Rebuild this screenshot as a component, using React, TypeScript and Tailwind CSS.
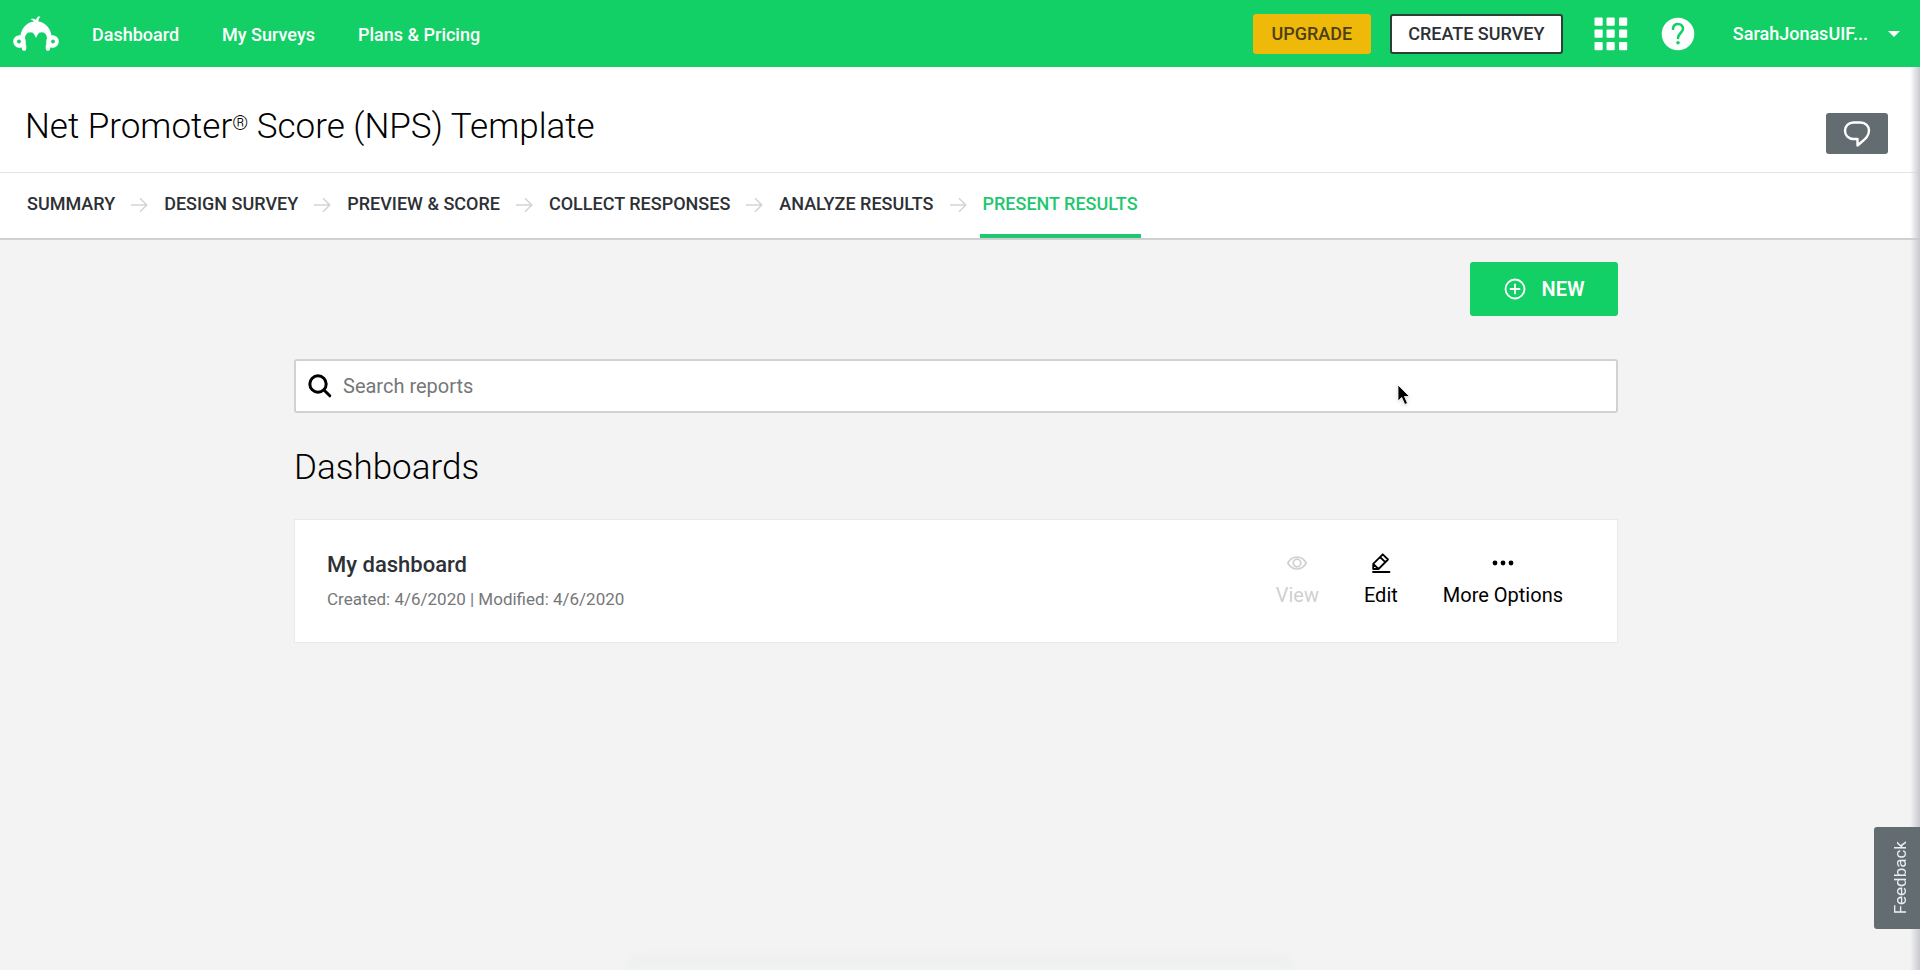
import { useState } from "react";

const steps = [
  "Summary",
  "Design Survey",
  "Preview & Score",
  "Collect Responses",
  "Analyze Results",
  "Present Results",
];

function MonkeyLogo() {
  return (
    <svg width="46" height="36" viewBox="0 0 46 36" fill="none" aria-hidden="true">
      <path
        d="M11 32.5C11.500 30 11 29 10.300 27.500C8 19 12 14 17.500 14C20 14 22 15 23 17C24 15 26 14 28.500 14C34 14 38 19 35.700 27.500C35 29 34.500 30 35 32.500"
        stroke="#fff"
        strokeWidth="4.500"
        strokeLinecap="round"
      />
      <path
        d="M7 22C8 11.500 14.500 6 21 5.500C19.500 4 18.500 3.500 17.500 3.200C20 2.500 22 3 23 4C23.300 2 24.500 .5 26 .2L27.500 1C26 2 25.500 3.500 25.500 5.500C32 6.200 38 12 39 22L34 24C34.500 18 32 15 28.500 15C26 15 24 16.500 23 19C22 16.500 20 15 17.500 15C14 15 11.500 18 12 24Z"
        fill="#fff"
      />
      <circle cx="6.500" cy="25.500" r="6.300" fill="#fff" />
      <circle cx="39.500" cy="25.500" r="6.300" fill="#fff" />
      <circle cx="6" cy="25.500" r="1.900" fill="#12d065" />
      <circle cx="40" cy="25.500" r="1.900" fill="#12d065" />
    </svg>
  );
}

function AppsIcon() {
  return (
    <svg width="34" height="34" viewBox="0 0 34 34" fill="#fff" aria-hidden="true">
      {[0.5, 12.5, 25].map((y) =>
        [0.5, 12.5, 25].map((x) => <rect key={`${x}-${y}`} x={x} y={y} width="8.200" height="8.200" rx="1" />),
      )}
    </svg>
  );
}

function HelpIcon() {
  return (
    <svg width="34" height="34" viewBox="0 0 34 34" fill="none" aria-hidden="true">
      <circle cx="17" cy="17" r="16.300" fill="#fff" />
      <path
        d="M12 11.800C12.300 8.500 14.300 7 17 7C20 7 22 9 22 11.800C22 15.800 17 16.300 17 21"
        stroke="#12d065"
        strokeWidth="2.600"
        strokeLinecap="round"
      />
      <circle cx="17" cy="25.800" r="1.800" fill="#12d065" />
    </svg>
  );
}

function StepArrow() {
  return (
    <svg width="17" height="16" viewBox="0 0 17 16" fill="none" stroke="#d3d4d5" strokeWidth="1.500" aria-hidden="true">
      <path d="M0 8H15.500M9 1.200L15.800 8L9 14.800" />
    </svg>
  );
}

function CommentIcon() {
  return (
    <svg width="28" height="28" viewBox="0 0 28 28" fill="none" stroke="#fff" strokeWidth="2.400" strokeLinejoin="round" aria-hidden="true">
      <path d="M10.500 2.500H17.500C22.500 2.500 26 6 26 10.500C26 17.500 20 20.500 14.500 25.500V19H10.500C5.500 19 2 15.500 2 10.800C2 6 5.500 2.500 10.500 2.500Z" />
    </svg>
  );
}

function PlusIcon() {
  return (
    <svg width="22" height="22" viewBox="0 0 22 22" fill="none" stroke="#fff" strokeWidth="1.800" strokeLinecap="round" aria-hidden="true">
      <circle cx="11" cy="11" r="9.500" />
      <path d="M11 6.500V15.500M6.500 11H15.500" />
    </svg>
  );
}

function SearchIcon() {
  return (
    <svg width="24" height="24" viewBox="0 0 24 24" fill="none" stroke="#000" strokeLinecap="round" aria-hidden="true">
      <circle cx="10" cy="10" r="8.200" strokeWidth="3" />
      <path d="M16.200 16.200L21.800 21.800" strokeWidth="3" />
    </svg>
  );
}

function EyeIcon() {
  return (
    <svg width="20" height="20" viewBox="0 0 20 20" fill="none" stroke="currentColor" strokeWidth="1.700" aria-hidden="true">
      <path d="M.8 10C3 6 6.200 4 10 4C13.800 4 17 6 19.200 10C17 14 13.800 16 10 16C6.200 16 3 14 .8 10Z" />
      <circle cx="10" cy="10" r="3.800" />
    </svg>
  );
}

function EditIcon() {
  return (
    <svg width="20" height="20" viewBox="0 0 20 20" fill="none" stroke="currentColor" strokeWidth="1.800" strokeLinejoin="round" strokeLinecap="round" aria-hidden="true">
      <path d="M2.200 10.800L11.700 1.300L17 6.500L7.500 16H2.200ZM9 4L14.300 9.200M2.200 10.800L7.500 16" />
      <path d="M2 19H18.500" />
    </svg>
  );
}

function MoreIcon() {
  return (
    <svg width="22" height="20" viewBox="0 0 22 20" fill="currentColor" aria-hidden="true">
      <circle cx="3" cy="10" r="2.400" />
      <circle cx="11" cy="10" r="2.400" />
      <circle cx="19" cy="10" r="2.400" />
    </svg>
  );
}

export default function App() {
  const [query, setQuery] = useState("");

  return (
    <div className="relative flex min-h-screen flex-col overflow-hidden bg-[#f3f3f3] font-['Roboto','Liberation_Sans',sans-serif] text-[#2d3035]">
      <header className="flex h-[67px] items-center justify-between bg-[#12d065] pr-5 pl-[13px] text-lg font-medium text-white">
        <nav className="flex items-center">
          <a href="#" aria-label="Home" className="mr-[33px]">
            <MonkeyLogo />
          </a>
          <div className="flex gap-[43px] pt-0.5">
            <a href="#">Dashboard</a>
            <a href="#">My Surveys</a>
            <a href="#">Plans &amp; Pricing</a>
          </div>
        </nav>
        <div className="flex items-center">
          <button className="h-10 w-[118px] rounded-[3px] bg-[#efb909] text-[#4d4017]">UPGRADE</button>
          <button className="ml-[19px] h-10 w-[173px] rounded-[3px] border-2 border-[#2d3f38] bg-white text-[#2d3035]">
            CREATE SURVEY
          </button>
          <button aria-label="Apps" className="ml-[31px]">
            <AppsIcon />
          </button>
          <button aria-label="Help" className="ml-[33px]">
            <HelpIcon />
          </button>
          <button className="ml-[38px] flex items-center gap-5">
            SarahJonasUIF...
            <svg width="12" height="6" viewBox="0 0 12 6" fill="#fff" aria-hidden="true">
              <path d="M0 0H12L6 6Z" />
            </svg>
          </button>
        </div>
      </header>

      <div className="flex h-[106px] items-center justify-between border-b border-[#e3e4e5] bg-white pr-8 pl-[25px]">
        <h1 className="pt-3.5 text-[35px] leading-[50px] font-light text-black">
          Net Promoter<span className="align-[8px] text-xl leading-none">®</span> Score (NPS) Template
        </h1>
        <button aria-label="Comments" className="mt-7 flex h-[41px] w-[62px] items-center justify-center rounded-[3px] bg-[#636c70]">
          <CommentIcon />
        </button>
      </div>

      <nav className="flex h-[67px] border-b-2 border-[#cfd0d1] bg-white pl-6 text-lg font-medium">
        {steps.map((step, i) => (
          <div key={step} className="flex">
            {i > 0 && (
              <span className="mx-[13px] flex items-center pb-0.5">
                <StepArrow />
              </span>
            )}
            <a
              href="#"
              className={
                i === steps.length - 1
                  ? "flex items-center border-b-4 border-[#1fc771] px-[3px] uppercase text-[#1fc771]"
                  : "flex items-center px-[3px] pb-1 uppercase"
              }
            >
              {step}
            </a>
          </div>
        ))}
      </nav>

      <main className="pt-[22px] pr-2">
        <div className="mx-auto flex max-w-[1324px] flex-col">
          <button className="flex h-[54px] w-[148px] items-center justify-center gap-4 self-end rounded-[3px] bg-[#12d065] text-xl font-semibold text-white">
            <PlusIcon />
            NEW
          </button>

          <label className="mt-[43px] flex h-[54px] items-center gap-[11px] rounded-[3px] border-2 border-[#d0d1d2] bg-white px-3">
            <SearchIcon />
            <input
              type="text"
              aria-label="Search reports"
              placeholder="Search reports"
              value={query}
              onChange={(e) => setQuery(e.target.value)}
              className="flex-1 text-xl outline-none placeholder:text-[#757779]"
            />
          </label>

          <h2 className="mt-[30px] text-[35px] leading-[50px] font-light text-black">Dashboards</h2>

          <section className="mt-[26px] flex h-[124px] items-center justify-between border border-[#e8e9e9] bg-white pr-[54px] pl-8">
            <div className="pt-0.5">
              <h3 className="text-[22px] leading-[34px] font-medium">My dashboard</h3>
              <p className="text-[17px] leading-[34px] text-[#757779]">Created: 4/6/2020 | Modified: 4/6/2020</p>
            </div>
            <div className="flex gap-[45px] text-xl text-black">
              <button disabled className="flex flex-col items-center gap-2 text-[#cfd0d1]">
                <EyeIcon />
                View
              </button>
              <button className="flex flex-col items-center gap-2">
                <EditIcon />
                Edit
              </button>
              <button className="flex flex-col items-center gap-2">
                <MoreIcon />
                More Options
              </button>
            </div>
          </section>
        </div>
      </main>

      <div className="pointer-events-none absolute top-[67px] right-0 bottom-0 w-2.5 bg-linear-to-r from-transparent to-[#c8c8d0]" />
      <div className="pointer-events-none absolute bottom-0 left-1/2 h-4 w-[670px] -translate-x-1/2 rounded-t-2xl bg-[#eff0f0] blur-[2px]" />
      <button className="absolute right-0 bottom-[41px] flex h-[102px] w-[46px] items-center justify-center rounded-l-[3px] bg-[#636c70] pl-2 text-[17px] text-[#e8eef2]">
        <span className="rotate-180 [writing-mode:vertical-rl]">Feedback</span>
      </button>
      <svg
        className="pointer-events-none absolute top-[384px] left-[1397px] drop-shadow"
        width="14"
        height="22"
        viewBox="0 0 14 22"
        aria-hidden="true"
      >
        <path d="M1 1V17L4.700 13.500L7.800 20.500L10.500 19.300L7.500 12.500H12.500Z" fill="#000" stroke="#fff" strokeWidth=".8" />
      </svg>
    </div>
  );
}
